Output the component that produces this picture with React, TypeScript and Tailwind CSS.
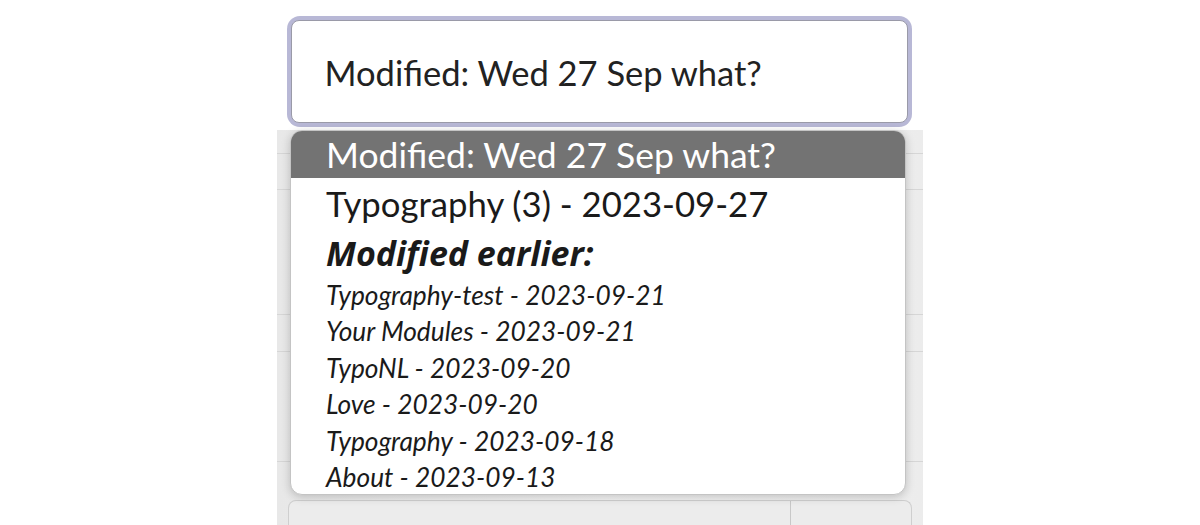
import React from "react";

const items = [
  "Typography-test - 2023-09-21",
  "Your Modules - 2023-09-21",
  "TypoNL - 2023-09-20",
  "Love - 2023-09-20",
  "Typography - 2023-09-18",
  "About - 2023-09-13",
];

export default function App() {
  return (
    <div
      className="w-[1200px] h-[525px] bg-white overflow-hidden flex flex-col items-center"
      style={{ fontFamily: "Lato, 'Open Sans', sans-serif" }}
    >
      <div className="w-[625px] h-[111px] mt-[16px] ml-[-2px] rounded-[13px] bg-[#b8b8d6] p-[4px]">
        <div className="h-full rounded-[8px] bg-white border border-[#9a9aa8] flex items-center pl-[33px] text-[34.5px] text-[#222] pt-[2px]">
          Modified: Wed 27 Sep what?
        </div>
      </div>
      <div className="relative w-[646px] flex-1 mt-[3px]">
        <div className="h-full flex bg-gradient-to-r from-[#e8e8e8] via-[#f4f4f4] to-[#ececec]">
          <div className="flex-1 flex flex-col">
            <div className="h-[24px] border-b border-[#d6d6d6]" />
            <div className="h-[36px] border-b border-[#d6d6d6]" />
            <div className="h-[125px] border-b border-[#d6d6d6]" />
            <div className="h-[37px] border-b border-[#d6d6d6]" />
            <div className="h-[110px] border-b border-[#d6d6d6]" />
            <div className="flex-1 flex items-end px-[11px]">
              <div className="w-full h-[25px] rounded-t-[8px] border border-b-0 border-[#cfcfcf] bg-[#ececec] flex">
                <div className="w-[502px] border-r border-[#c8c8c8]" />
              </div>
            </div>
          </div>
        </div>
        <div className="absolute left-[13px] top-0 w-[616px] h-[365px] bg-white rounded-[12px] border border-[#c4c4c4] shadow-[0_2px_10px_rgba(0,0,0,0.2)] overflow-hidden flex flex-col">
          <div className="h-[47px] shrink-0 bg-[#737373] text-white text-[35.5px] leading-[47px] pl-[35px]">
            Modified: Wed 27 Sep what?
          </div>
          <div className="h-[52px] shrink-0 text-[34.7px] leading-[52px] pl-[35px] text-[#1a1a1a]">
            Typography (3) - 2023-09-27
          </div>
          <div
            className="h-[47px] shrink-0 text-[34px] leading-[47px] pl-[35px] font-bold italic text-[#1a1a1a] whitespace-nowrap"
            style={{ fontFamily: "'Open Sans', Lato, sans-serif" }}
          >
            Modified earlier:
          </div>
          {items.map((t) => (
            <div
              key={t}
              className="h-[36.4px] shrink-0 text-[26.3px] leading-[36.4px] pl-[35px] italic text-[#1a1a1a] whitespace-nowrap"
            >
              {t}
            </div>
          ))}
        </div>
      </div>
    </div>
  );
}
